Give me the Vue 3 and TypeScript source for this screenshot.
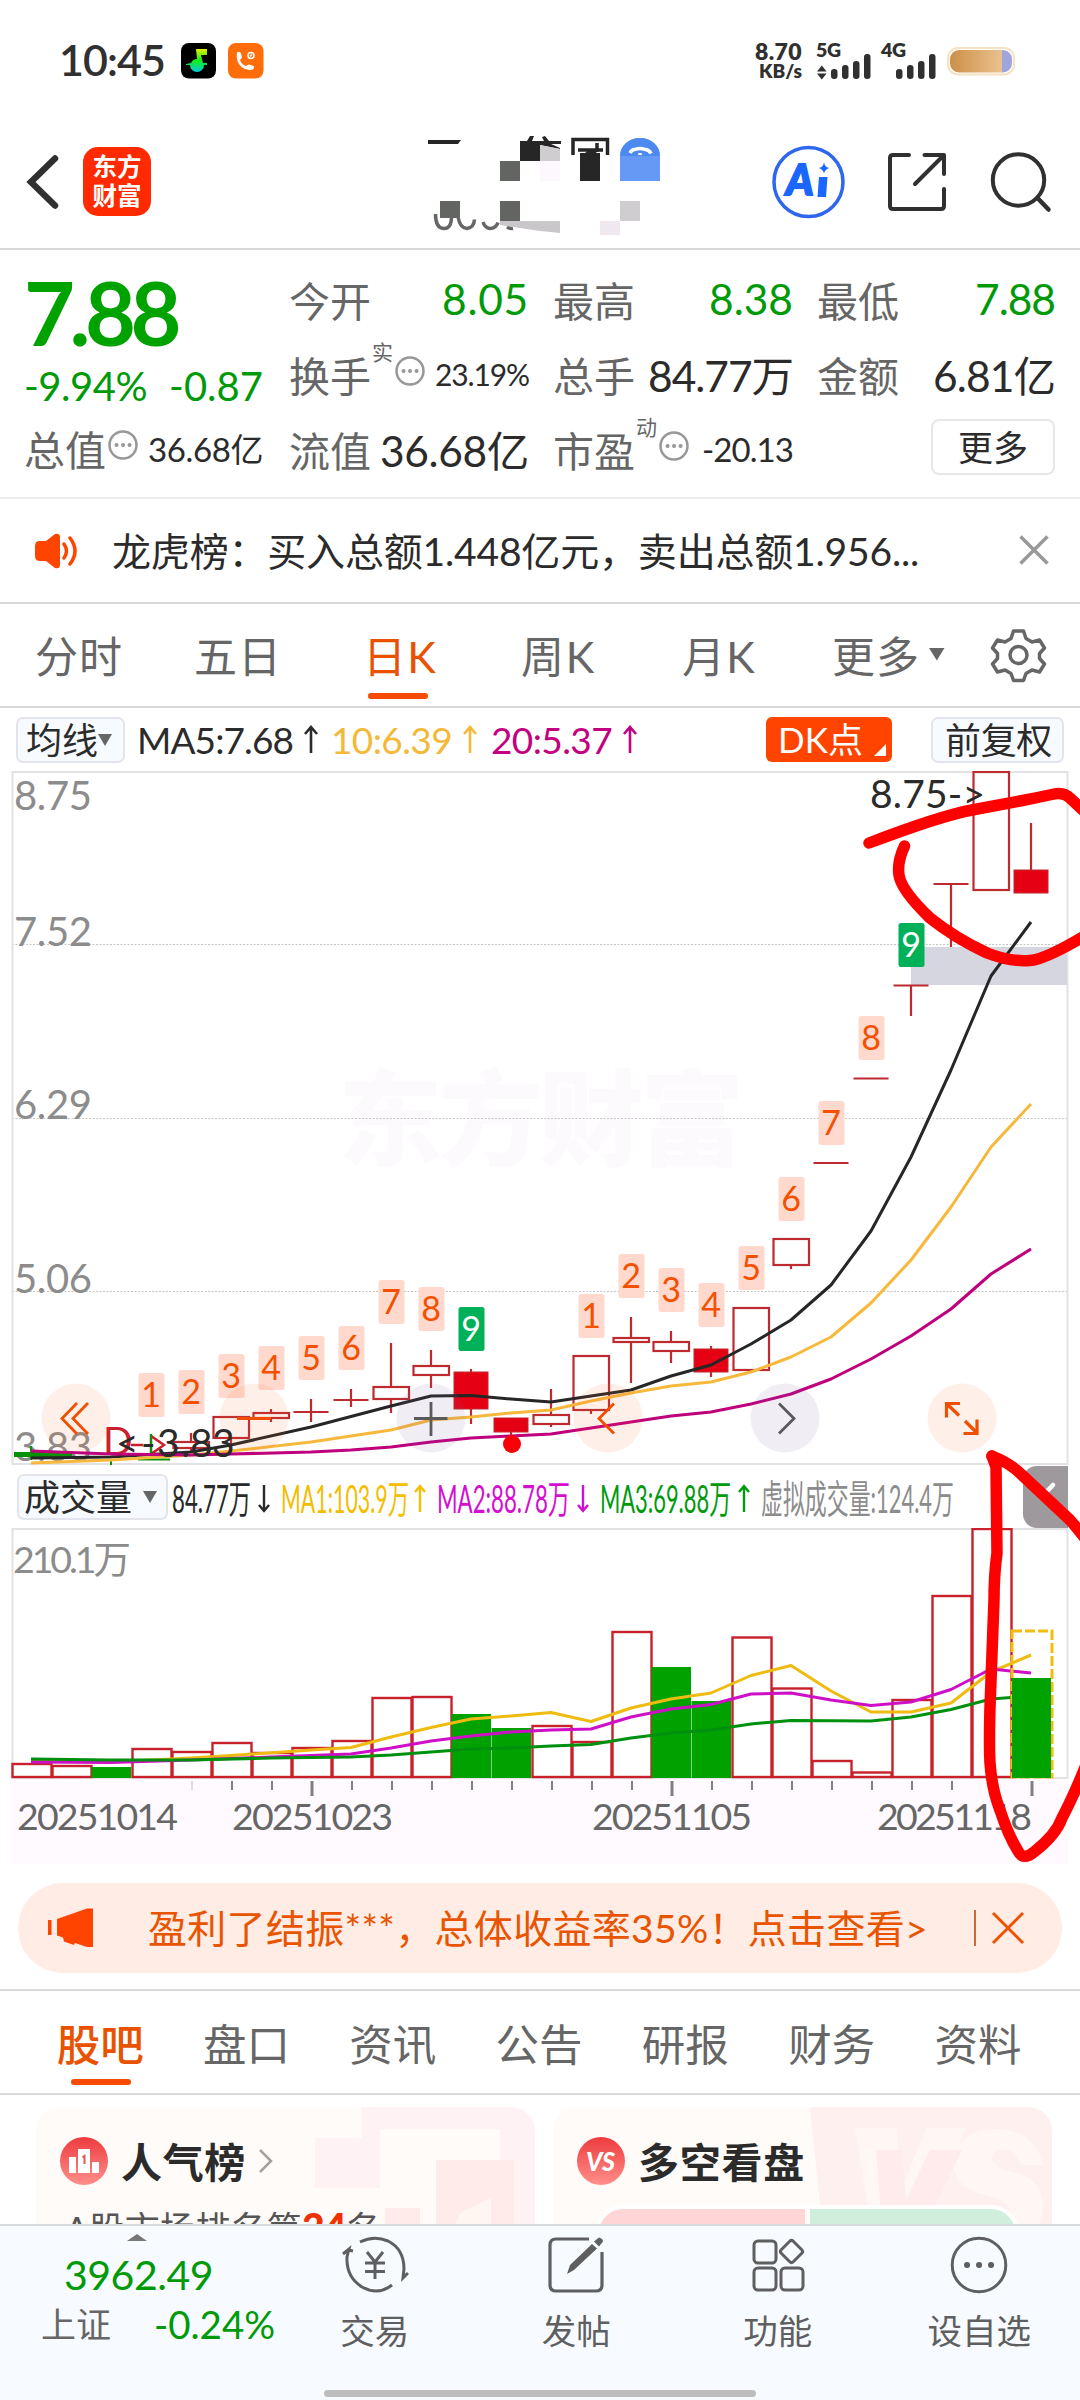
<script setup lang="ts">
type Candle = {
  x: number
  top: number
  bottom: number
  high?: number
  low?: number
  kind: 'hollow' | 'solid' | 'line'
}
type Badge = { x: number; y: number; n: number; green?: boolean }
type Bar = { x: number; top: number; down?: boolean }

/* Spreads the letters of an element so that it takes the given width. */
const vFit = {
  mounted(el: HTMLElement, binding: { value: number }) {
    const count = (el.textContent ?? '').trim().length
    const natural = el.getBoundingClientRect().width
    el.style.letterSpacing = `${(binding.value - natural) / count}px`
  },
}

const periods = [
  { name: '分时', left: 35, width: 88 },
  { name: '五日', left: 194, width: 88 },
  { name: '日K', left: 363, width: 74, active: true },
  { name: '周K', left: 521, width: 75 },
  { name: '月K', left: 682, width: 74 },
  { name: '更多', left: 832, width: 88 },
]

const sections = ['股吧', '盘口', '资讯', '公告', '研报', '财务', '资料']

const gridLines = [944.5, 1118.5, 1291.5]
const axis = [
  { v: '8.75', y: 810 },
  { v: '7.52', y: 946 },
  { v: '6.29', y: 1119 },
  { v: '5.06', y: 1293 },
  { v: '3.83', y: 1461 },
]

const candles: Candle[] = [
  { x: 1031, top: 870, bottom: 893, high: 823, kind: 'solid' },
  { x: 991, top: 772, bottom: 890, kind: 'hollow' },
  { x: 951, top: 884, bottom: 884, low: 947, kind: 'line' },
  { x: 911, top: 985.5, bottom: 985.5, low: 1016, kind: 'line' },
  { x: 871, top: 1078.5, bottom: 1078.5, kind: 'line' },
  { x: 831, top: 1163, bottom: 1163, kind: 'line' },
  { x: 791, top: 1239, bottom: 1265, low: 1269, kind: 'hollow' },
  { x: 751, top: 1308, bottom: 1370, kind: 'hollow' },
  { x: 711, top: 1349, bottom: 1372, high: 1346, low: 1377, kind: 'solid' },
  { x: 671, top: 1342, bottom: 1351, high: 1331, low: 1363, kind: 'hollow' },
  { x: 631, top: 1338, bottom: 1342, high: 1317, low: 1383, kind: 'hollow' },
  { x: 591, top: 1356, bottom: 1410, low: 1414, kind: 'hollow' },
  { x: 551, top: 1415, bottom: 1424, high: 1389, low: 1427, kind: 'hollow' },
  { x: 511, top: 1418, bottom: 1432, low: 1438, kind: 'solid' },
  { x: 471, top: 1372, bottom: 1409, high: 1369, low: 1424, kind: 'solid' },
  { x: 431, top: 1366, bottom: 1375, high: 1350, low: 1388, kind: 'hollow' },
  { x: 391, top: 1387, bottom: 1399, high: 1343, low: 1413, kind: 'hollow' },
  { x: 351, top: 1400, bottom: 1400, high: 1389, low: 1407, kind: 'line' },
  { x: 311, top: 1412, bottom: 1412, high: 1399, low: 1422, kind: 'line' },
  { x: 271, top: 1413, bottom: 1418, high: 1409, low: 1422, kind: 'hollow' },
  { x: 231, top: 1417, bottom: 1438, low: 1445, kind: 'hollow' },
  { x: 191, top: 1442, bottom: 1448, high: 1433, low: 1452, kind: 'hollow' },
]

const badges: Badge[] = [
  { x: 151, y: 1373, n: 1 },
  { x: 191, y: 1370, n: 2 },
  { x: 231, y: 1354, n: 3 },
  { x: 271, y: 1346, n: 4 },
  { x: 311, y: 1336, n: 5 },
  { x: 351, y: 1326, n: 6 },
  { x: 391, y: 1280, n: 7 },
  { x: 431, y: 1287, n: 8 },
  { x: 471, y: 1307, n: 9, green: true },
  { x: 591, y: 1294, n: 1 },
  { x: 631, y: 1254, n: 2 },
  { x: 671, y: 1268, n: 3 },
  { x: 711, y: 1283, n: 4 },
  { x: 751, y: 1246, n: 5 },
  { x: 791, y: 1177, n: 6 },
  { x: 831, y: 1101, n: 7 },
  { x: 871, y: 1016, n: 8 },
  { x: 911, y: 923, n: 9, green: true },
]

const ma5 =
  '31,1458 111,1457 191,1452 231,1445 311,1427 391,1406 431,1396 471,1395.5 511,1399 551,1402 591,1396 631,1390 671,1376 711,1365 751,1344 791,1320 831,1285 871,1231 911,1157 951,1070 991,976 1031,922'
const ma10 =
  '31,1463 111,1460 191,1455 231,1451 311,1442 391,1430 431,1420 471,1417 511,1413 551,1410 591,1401 631,1393 671,1386 711,1382 751,1372 791,1357 831,1337 871,1303 911,1260 951,1207 991,1147 1031,1104'
const ma20 =
  '31,1451 111,1454 191,1455 231,1454 311,1452 351,1450 391,1447 431,1442 471,1438 511,1436 551,1434 591,1428 631,1422 671,1416 711,1412 751,1404 791,1394 831,1379 871,1359 911,1336 951,1309 991,1274 1031,1249'

const bars: Bar[] = [
  { x: 31, top: 1764 },
  { x: 71, top: 1766 },
  { x: 111, top: 1767, down: true },
  { x: 151, top: 1749 },
  { x: 191, top: 1752 },
  { x: 231, top: 1743 },
  { x: 271, top: 1753 },
  { x: 311, top: 1748 },
  { x: 351, top: 1741 },
  { x: 391, top: 1698 },
  { x: 431, top: 1697 },
  { x: 471, top: 1714, down: true },
  { x: 511, top: 1728, down: true },
  { x: 551, top: 1726 },
  { x: 591, top: 1742 },
  { x: 631, top: 1632 },
  { x: 671, top: 1667, down: true },
  { x: 711, top: 1701, down: true },
  { x: 751, top: 1637.5 },
  { x: 791, top: 1688.5 },
  { x: 831, top: 1761 },
  { x: 871, top: 1772.5 },
  { x: 911, top: 1700 },
  { x: 951, top: 1596 },
  { x: 991, top: 1529 },
]
const vol1 =
  '31,1761 111,1762 191,1758 231,1755.5 311,1750 351,1747.5 391,1737 431,1727.5 471,1719 511,1716 551,1712.5 591,1721.5 631,1708 671,1699 711,1693 751,1675.5 791,1665.5 831,1691 871,1712 911,1712 951,1703 991,1672 1031,1655'
const vol2 =
  '31,1762 111,1762.5 191,1760 271,1757 351,1754 391,1748 431,1741 471,1736 511,1732 551,1730 591,1729 631,1717 671,1709 711,1704.5 751,1694 791,1693 831,1700 871,1705.5 911,1702 951,1689.5 991,1669 1031,1673'
const vol3 =
  '31,1759 111,1760 191,1760 271,1758 351,1757 391,1755 431,1752 471,1749 511,1748 551,1746 591,1744.5 631,1738 671,1733 711,1730 751,1724 791,1720.5 871,1721 911,1717 951,1709.5 991,1699 1031,1696'

const ticks = Array.from({ length: 22 }, (_, i) => 192 + i * 40)
const isMajor = (x: number): boolean => x === 312 || x === 672 || x === 1032

const volumeStats = [
  { text: '84.77万', x: 172, w: 79, color: '#2a2a2a', arrow: 264, up: false },
  { text: 'MA1:103.9万', x: 281, w: 128, color: '#f3bd00', arrow: 420, up: true },
  { text: 'MA2:88.78万', x: 437, w: 133, color: '#d40fcf', arrow: 583, up: false },
  { text: 'MA3:69.88万', x: 600, w: 131, color: '#009a0c', arrow: 744, up: true },
  { text: '虚拟成交量:124.4万', x: 761, w: 193, color: '#8c8c8c', arrow: 0, up: true },
]
</script>

<template>
  <div class="page">
    <!-- status bar -->
    <div class="status">
      <span v-fit="106" class="clock">10:45</span>
      <svg class="app-ic" width="36" height="36" viewBox="0 0 36 36">
        <defs>
          <linearGradient id="note" x1="0" y1="0" x2="0" y2="1">
            <stop offset="0" stop-color="#e4f000" />
            <stop offset=".5" stop-color="#10f010" />
            <stop offset="1" stop-color="#00c8e0" />
          </linearGradient>
        </defs>
        <rect width="35" height="35.5" rx="8" />
        <path d="M15 6h11v6h-6l2 8h4v2h-3a7 7 0 0 1-14 0H5v-1l5-1a7 7 0 0 1 6-4z" fill="url(#note)" />
      </svg>
      <svg class="app-ic2" width="36" height="36" viewBox="0 0 36 36">
        <rect width="35.5" height="35.5" rx="8" fill="#ff6c0a" />
        <path d="M9 9.500q3-2 4 1l1 4-2 2.500q1 4 6 6l3-1.500 4.500 1.500q1.500 2-1 3.500-5 2-11-2.500-6-5.500-4.500-14.500z" fill="#fff" />
        <circle cx="23" cy="12.500" r="3" fill="none" stroke="#fff" stroke-width="1.600" />
        <path d="M22 13.500l2-2" stroke="#fff" stroke-width="1.200" />
      </svg>
      <div class="speed">
        <span v-fit="47" class="sp1">8.70</span>
        <span v-fit="43" class="sp2">KB/s</span>
      </div>
      <svg class="signals" width="210" height="50" viewBox="815 31 210 50">
        <g class="net">
          <text x="816" y="57" textLength="25">5G</text>
          <text x="881" y="57" textLength="25">4G</text>
        </g>
        <g fill="#303030">
          <path d="M817 71.500l4.800-6 4.800 6zM817 73.500l4.800 6 4.800-6z" />
          <rect x="831" y="69" width="6.500" height="10" rx="3" />
          <rect x="842" y="65" width="6.500" height="14" rx="3" />
          <rect x="853" y="61" width="6.500" height="18" rx="3" />
          <rect x="864" y="54" width="6.500" height="25" rx="3" />
          <rect x="896" y="69" width="6.500" height="10" rx="3" />
          <rect x="907" y="65" width="6.500" height="14" rx="3" />
          <rect x="918" y="61" width="6.500" height="18" rx="3" />
          <rect x="929" y="54" width="6.500" height="25" rx="3" />
        </g>
        <defs>
          <linearGradient id="bat"><stop offset="0" stop-color="#cb8f49" /><stop offset="1" stop-color="#ebc18e" /></linearGradient>
          <clipPath id="batclip"><rect x="950" y="50" width="62" height="22.500" rx="9" /></clipPath>
        </defs>
        <rect x="948" y="48" width="66" height="26.500" rx="10" fill="#fff" stroke="#f5e2c0" stroke-width="2" />
        <g clip-path="url(#batclip)">
          <rect x="950" y="50" width="52" height="23" fill="url(#bat)" />
          <rect x="1002" y="50" width="10" height="23" fill="#a0a5dc" />
        </g>
      </svg>
    </div>

    <!-- title bar -->
    <header class="header">
      <svg class="back" width="40" height="60" viewBox="22 152 40 60">
        <path d="M55 158.500L31 182l24 23.500" fill="none" stroke="#303030" stroke-width="6.500" stroke-linecap="round" />
      </svg>
      <div class="logo"><span>东方</span><span>财富</span></div>
      <svg class="mosaic" width="240" height="110" viewBox="425 130 240 110">
        <path d="M428 140h33l-3 4h-30z" fill="#262626" />
        <path d="M520 141h7l3-5h4l-2 5h8v20h-20zM540 141h4l-2-4 3-1 4 5h12v3h-10l9 4v1l-20-4z" fill="#262626" />
        <path d="M540 145l20 4v12h-20z" fill="#cfcdcf" />
        <rect x="540" y="161" width="20" height="20" fill="#fdf8fe" />
        <g fill="#636563">
          <rect x="500" y="161" width="20" height="20" />
          <rect x="440" y="201" width="20" height="17" />
          <rect x="500" y="201" width="20" height="20" />
        </g>
        <g fill="none" stroke="#666" stroke-width="3.500">
          <path d="M435.500 214q0 14 8 14.500t8-12M458 217q2 11 9 11.500 7-1 7.500-9M483 222q2 6 7 6.500 6 0 8-6M507 227q3 2 6 1.500" />
        </g>
        <path d="M500 221h60v12l-20-2-40-6z" fill="#cac7ca" />
        <path d="M573 155v-15.500h34.500V155M578 150h25M597 143v9M586 154l10-3" fill="none" stroke="#262626" stroke-width="3.500" />
        <rect x="580" y="153" width="20" height="28" fill="#262626" />
        <path d="M620 156a20 18 0 0 1 40 0v25h-40z" fill="#6699f6" />
        <path d="M620 156a20 18 0 0 1 40 0z" fill="#4c8af0" />
        <path d="M630 153q2-4 5-3.500 5-2 10 0 4 0 6 4M640 153v2" fill="none" stroke="#fff" stroke-width="3.500" />
        <rect x="620" y="201" width="20" height="20" fill="#cfcdcf" />
        <rect x="600" y="221" width="20" height="14" fill="#efe9ef" />
      </svg>
      <svg class="actions" width="290" height="80" viewBox="770 142 290 80">
        <circle cx="808.500" cy="182" r="34.500" fill="none" stroke="#2f66ee" stroke-width="3.500" />
        <text class="ai" x="786" y="194.500">A</text>
        <path d="M819 177h8.500l-1.500 20h-8.500z" fill="#1a66ff" />
        <path d="M824 162.500q1 5 5.500 5.500-4.500 1-5.500 5.500-1-4.500-5.500-5.500 4.500-.5 5.500-5.500z" fill="#1a66ff" />
        <g fill="none" stroke="#303030" stroke-width="4" stroke-linecap="round" stroke-linejoin="round">
          <path d="M909 155h-16q-3 0-3 3v48q0 3 3 3h48q3 0 3-3v-17M924.500 155H944v19M943 156l-28 28" />
          <circle cx="1018.500" cy="180" r="25.700" />
          <path d="M1037.500 198l11 11.500" stroke-width="4.500" />
        </g>
      </svg>
    </header>

    <!-- quote -->
    <section class="quote">
      <div class="main-col">
        <div class="price"><span v-fit="152">7.88</span></div>
        <div class="change"><span v-fit="123">-9.94%</span><span v-fit="94">-0.87</span></div>
        <div class="cell total">
          <span class="label">总值</span>
          <svg class="dots" width="30" height="30" viewBox="0 0 30 30"><circle cx="15" cy="15" r="13.500" /><path d="M8.500 15h.1M15 15h.1M21.500 15h.1" /></svg>
          <span v-fit="115" class="val md">36.68亿</span>
        </div>
      </div>
      <div class="cols">
        <div class="cell"><span class="label">今开</span><span v-fit="87" class="val green">8.05</span></div>
        <div class="cell"><span class="label">最高</span><span v-fit="84" class="val green">8.38</span></div>
        <div class="cell"><span class="label">最低</span><span v-fit="80" class="val green">7.88</span></div>
        <div class="cell">
          <span class="label">换手</span><span class="sup">实</span>
          <svg class="dots" width="30" height="30" viewBox="0 0 30 30"><circle cx="15" cy="15" r="13.500" /><path d="M8.500 15h.1M15 15h.1M21.500 15h.1" /></svg>
          <span v-fit="94" class="val sm">23.19%</span>
        </div>
        <div class="cell"><span class="label">总手</span><span v-fit="145" class="val">84.77万</span></div>
        <div class="cell"><span class="label">金额</span><span v-fit="122" class="val">6.81亿</span></div>
        <div class="cell"><span class="label">流值</span><span v-fit="149" class="val">36.68亿</span></div>
        <div class="cell">
          <span class="label">市盈</span><span class="sup">动</span>
          <svg class="dots" width="30" height="30" viewBox="0 0 30 30"><circle cx="15" cy="15" r="13.500" /><path d="M8.500 15h.1M15 15h.1M21.500 15h.1" /></svg>
          <span v-fit="91" class="val md">-20.13</span>
        </div>
        <div class="cell"><button class="more">更多</button></div>
      </div>
    </section>

    <!-- notice -->
    <section class="notice">
      <svg width="48" height="40" viewBox="32 530 48 40">
        <path d="M35 545q0-5 5-5h6l9-7q5-1 5 3v28q0 4-5 3l-9-7h-6q-5 0-5-5z" fill="#ff4400" />
        <path d="M64 543q5 7 0 14M70 537q10 13 0 26" fill="none" stroke="#ff4400" stroke-width="3.500" stroke-linecap="round" />
      </svg>
      <span v-fit="807" class="notice-text">龙虎榜：买入总额1.448亿元，卖出总额1.956...</span>
      <svg class="close" width="34" height="34" viewBox="0 0 34 34"><path d="M3.500 3.500l27 27M30.500 3.500l-27 27" stroke="#999" stroke-width="3.500" /></svg>
    </section>

    <!-- periods -->
    <nav class="periods">
      <div v-for="p in periods" :key="p.name" class="period" :class="{ on: p.active }" :style="{ left: p.left + 'px' }">
        <span v-fit="p.width">{{ p.name }}</span>
      </div>
      <svg class="gear" width="150" height="60" viewBox="920 625 150 60">
        <path d="M929 649h15.500l-7.700 12.500z" fill="#666" />
        <path
          d="M1013.500 632h10l2.500 7.500 6 3.500 7.500-2 5 8-5 5.500v5l5 5.500-5 8-7.500-2-6 3.500-2.500 7h-10l-2.500-7-6-3.500-7.500 2-5-8 5-5.500v-5l-5-5.500 5-8 7.500 2 6-3.500z"
          fill="none" stroke="#666" stroke-width="3.500" stroke-linejoin="round" />
        <circle cx="1018.500" cy="656" r="8.500" fill="none" stroke="#666" stroke-width="3.500" />
      </svg>
    </nav>

    <!-- moving averages -->
    <div class="ma-bar">
      <div class="pill ma-pick"><span v-fit="72">均线</span><i class="tri"></i></div>
      <span v-fit="156" class="ma black">MA5:7.68</span>
      <svg class="arr a1" width="16" height="30" viewBox="0 0 16 30"><path d="M8 28V3M2 9l6-7 6 7" /></svg>
      <span v-fit="121" class="ma yellow">10:6.39</span>
      <svg class="arr a2" width="16" height="30" viewBox="0 0 16 30"><path d="M8 28V3M2 9l6-7 6 7" /></svg>
      <span v-fit="121" class="ma pink">20:5.37</span>
      <svg class="arr a3" width="16" height="30" viewBox="0 0 16 30"><path d="M8 28V3M2 9l6-7 6 7" /></svg>
      <div class="dk"><span v-fit="85">DK点</span></div>
      <div class="pill adj"><span v-fit="107">前复权</span></div>
    </div>

    <!-- candles -->
    <svg class="kchart" width="1080" height="694" viewBox="0 771 1080 694">
      <text class="mark" x="338" y="1158" textLength="406">东方财富</text>
      <g stroke="#c6c6c6" stroke-width="1" stroke-dasharray="2 1.500">
        <line v-for="y in gridLines" :key="y" x1="12" x2="1067" :y1="y" :y2="y" />
      </g>
      <path d="M12.500 1464V772H1067.500V1464z" fill="none" stroke="#e2e2e4" stroke-width="2" />
      <rect x="911" y="947" width="156" height="38" fill="#d6d6e0" />
      <text v-for="a in axis" :key="a.v" class="axis" x="14" :y="a.y" textLength="78">{{ a.v }}</text>

      <g stroke="#089208" fill="none" stroke-width="2">
        <path d="M31 1446v14M111 1459v6M138 1459.500h32" />
        <path d="M14 1454.500h58" stroke-width="5" />
      </g>
      <text class="hi drop" x="103" y="1455">D</text>
      <path d="M151 1436v18l13-9zM131 1445h12" fill="none" stroke="#c8212c" stroke-width="2.500" />
      <path d="M151 1434v20" stroke="#089208" stroke-width="2" />

      <g v-for="c in candles" :key="c.x" stroke="#bd2a30" stroke-width="2.200">
        <line v-if="c.high" :x1="c.x" :x2="c.x" :y1="c.high" :y2="c.top" />
        <line v-if="c.low" :x1="c.x" :x2="c.x" :y1="c.bottom" :y2="c.low" />
        <line v-if="c.kind === 'line'" :x1="c.x - 17.500" :x2="c.x + 17.500" :y1="c.top" :y2="c.top" />
        <rect v-else-if="c.kind === 'solid'" :x="c.x - 17" :y="c.top" width="34" :height="c.bottom - c.top" fill="#e60014" stroke-width="1" />
        <rect v-else :x="c.x - 17.500" :y="c.top" width="35.500" :height="c.bottom - c.top" fill="#fff" />
      </g>

      <g v-for="b in badges" :key="'b' + b.x">
        <rect :x="b.x - 12.500" :y="b.y" width="26" height="44" rx="2.500" :fill="b.green ? '#00b159' : '#ffd9cd'" />
        <text class="badge" :x="b.x" :y="b.y + 34" :fill="b.green ? '#fff' : '#f45000'">{{ b.n }}</text>
      </g>

      <g fill="none" stroke-width="3" stroke-linejoin="round">
        <polyline :points="ma5" stroke="#262626" />
        <polyline :points="ma10" stroke="#f7b83c" />
        <polyline :points="ma20" stroke="#bf007c" />
      </g>
      <circle cx="512" cy="1444" r="9" fill="#fb0007" />

      <g class="rounds">
        <circle cx="76" cy="1418" r="34.500" fill="#ff6a30" />
        <circle cx="254" cy="1418" r="34.500" fill="#ff6a30" />
        <circle cx="431" cy="1418" r="34.500" fill="#7a5a9a" />
        <circle cx="608" cy="1418" r="34.500" fill="#ff6a30" />
        <circle cx="785" cy="1418" r="34.500" fill="#7a5a9a" />
        <circle cx="962" cy="1418" r="34.500" fill="#ff6a30" />
      </g>
      <g fill="none" stroke="#f04e00" stroke-width="2.800">
        <path d="M77 1403l-15 15.500 15 15.500M88 1403l-15 15.500 15 15.500M237 1418.500h34M614 1403.500l-15 15 15 15" />
        <path d="M960 1403.500h-13.500v14M947 1404l12 11.500M963.500 1433.500H977v-14M977 1433l-12-12" stroke-width="3.200" />
      </g>
      <path d="M431 1402v34M414 1418.500h33.500M779 1403.500l15 15-15 15" fill="none" stroke="#5a5a5c" stroke-width="2.800" />
      <text class="hi" x="870" y="808" textLength="115">8.75-&gt;</text>
      <text class="hi" x="116 141 157 181 190 212" y="1457">&lt;-3.83</text>
    </svg>

    <!-- volume -->
    <div class="vol-head">
      <div class="pill vol-pick"><span v-fit="108">成交量</span><i class="tri"></i></div>
      <svg class="vol-stats" width="790" height="60" viewBox="172 1466 790 60">
        <g v-for="s in volumeStats" :key="s.text" :fill="s.color">
          <text class="stat" :x="s.x" y="1511.500" :textLength="s.w" lengthAdjust="spacingAndGlyphs">{{ s.text }}</text>
          <path
            v-if="s.arrow" fill="none" :stroke="s.color" stroke-width="2.400"
            :d="s.up ? `M${s.arrow} 1511v-26m-5 6l5-6 5 6` : `M${s.arrow} 1484v26m-5-6l5 6 5-6`" />
        </g>
      </svg>
      <div class="fold"><svg width="45" height="62" viewBox="1023 1466 45 62"><path d="M1053 1485l-11 11.500 11 11.500" fill="none" stroke="#fff" stroke-width="4.500" stroke-linecap="round" /></svg></div>
    </div>
    <svg class="vchart" width="1080" height="337" viewBox="0 1528 1080 337">
      <rect x="12" y="1778" width="1056" height="86" fill="#fefaff" />
      <path d="M12.500 1778V1529H1067.500V1778z" fill="none" stroke="#e2e2e4" stroke-width="2" />
      <text class="axis vtop" x="13" y="1572.500" textLength="118">210.1万</text>
      <g v-for="b in bars" :key="b.x">
        <rect v-if="b.down" :x="b.x - 19.500" :y="b.top" width="39.500" :height="1778 - b.top" fill="#00a200" />
        <rect v-else :x="b.x - 18.500" :y="b.top" width="39" :height="1777 - b.top" fill="#fff" stroke="#c8212c" stroke-width="2.400" />
      </g>
      <g fill="none" stroke-width="3" stroke-linejoin="round">
        <polyline :points="vol1" stroke="#efbb10" />
        <polyline :points="vol2" stroke="#cf0fc8" />
        <polyline :points="vol3" stroke="#009010" />
      </g>
      <rect x="1012" y="1631" width="40" height="146" fill="none" stroke="#f3bd10" stroke-width="3" stroke-dasharray="10 3" />
      <rect x="1012" y="1678" width="39" height="100" fill="#00a200" />
      <line v-for="t in ticks" :key="t" :x1="t" :x2="t" y1="1781" :y2="isMajor(t) ? 1796 : 1790" :stroke="t === 192 ? '#ddd' : '#808080'" :stroke-width="isMajor(t) ? 3 : 2" />
      <g class="date">
        <text x="17" y="1830" textLength="161">20251014</text>
        <text x="232" y="1830" textLength="161">20251023</text>
        <text x="592" y="1830" textLength="160">20251105</text>
        <text x="877" y="1830" textLength="155">20251118</text>
      </g>
    </svg>

    <!-- promo -->
    <div class="promo">
      <svg width="50" height="44" viewBox="46 1906 50 44">
        <path d="M48 1920h3.500v15H48zM57 1919l30-10.500h6V1947h-6l-12-4-1 2-10-3.500-1-4-6-2z" fill="#ff4400" />
      </svg>
      <span v-fit="780" class="promo-text">盈利了结振***，总体收益率35%！点击查看&gt;</span>
      <i class="bar"></i>
      <svg class="x" width="34" height="34" viewBox="0 0 34 34"><path d="M2 2l30 30M32 2L2 32" stroke="#ee5200" stroke-width="3" /></svg>
    </div>

    <nav class="sections">
      <span v-for="(s, i) in sections" :key="s" :class="{ on: i === 0 }">{{ s }}</span>
    </nav>

    <div class="cards">
      <div class="card">
        <svg class="card-bg" width="499" height="117" viewBox="36 2107 499 117">
          <path d="M362 2107h173v117h-35v-95H380v59h-65v-50h47z" fill="#fff2f4" />
          <path d="M436 2160h78v64h-78zM385 2208h35v16h-35z" fill="#ffebea" />
          <path d="M455 2224l6-12 30-14v26z" fill="#fff6f2" />
        </svg>
        <div class="card-title">
          <svg width="48" height="48" viewBox="0 0 48 48">
            <defs><linearGradient id="ic" x1="0" y1="0" x2="0" y2="1"><stop offset="0" stop-color="#ee3b3f" /><stop offset="1" stop-color="#ff8f8a" /></linearGradient></defs>
            <circle cx="24" cy="24" r="24" fill="url(#ic)" />
            <path d="M9 20h7v16H9zM18 12h12v24H18zM32 25h7v11h-7z" fill="#fff" />
            <path d="M22.500 20.500l2-1.500v8" fill="none" stroke="#ee5555" stroke-width="2" />
          </svg>
          <span v-fit="125">人气榜</span>
          <svg class="chev" width="16" height="26" viewBox="0 0 16 26"><path d="M2 2l11 11L2 24" fill="none" stroke="#a8a0a0" stroke-width="2.500" /></svg>
        </div>
        <div class="rank"><span v-fit="237">A股市场排名第</span><b v-fit="44">24</b><span>名</span></div>
      </div>
      <div class="card">
        <svg class="card-bg" width="499" height="117" viewBox="553 2107 499 117">
          <path d="M810 2107h242v117H822z" fill="#fff0f0" />
          <path d="M855 2128h42l5 60 24-60h40l-45 96h-50z" fill="#fff7f3" />
          <path d="M1043 2165q-8-36-50-36-38 2-40 36 2 25 40 32 22 6 16 27h30q16-45-34-54-20-8-10-18 18-9 26 13z" fill="#fff7f4" />
          <path d="M876 2150h26l4 50 24-50h32l-36 74h-44z" fill="#ffebeb" />
        </svg>
        <div class="card-title">
          <svg width="48" height="48" viewBox="0 0 48 48">
            <circle cx="24" cy="24" r="24" fill="url(#ic)" />
            <text class="vs" x="23.500" y="34" textLength="29" lengthAdjust="spacingAndGlyphs">VS</text>
          </svg>
          <span v-fit="167">多空看盘</span>
        </div>
        <div class="duel"><i class="r"></i><i class="g"></i></div>
      </div>
    </div>

    <footer class="dock">
      <div class="index">
        <i class="up"></i>
        <div class="idx"><span v-fit="149">3962.49</span></div>
        <div class="idx2"><span v-fit="70" class="nm">上证</span><span v-fit="121" class="pc">-0.24%</span></div>
      </div>
      <div class="item">
        <svg width="68" height="60" viewBox="341 2233 68 60">
          <g fill="none" stroke="#5f5f61" stroke-width="3">
            <path d="M360 2241q14-7 28-1 16 8 16 28l-1 9 5-5M392 2284q-14 11-30 2-16-10-15-30l2-8-6 5M353 2250l-5-1" />
            <path d="M367 2251l8 10 8-10M375 2261v17M365 2262h20M365 2270.500h20" />
          </g>
        </svg>
        <span>交易</span>
      </div>
      <div class="item">
        <svg width="68" height="60" viewBox="543 2233 68 60">
          <path d="M590 2238h-33q-6 0-6 6v40q0 6 6 6h40q6 0 6-6v-33" fill="none" stroke="#5f5f61" stroke-width="3.200" />
          <path d="M568 2273l3-9 22-21 5 4.500-23 21.500zM595 2240.500l5-4q4 1 4 4l-4 5z" fill="#5f5f61" />
        </svg>
        <span>发帖</span>
      </div>
      <div class="item">
        <svg width="68" height="60" viewBox="744 2233 68 60">
          <g fill="none" stroke="#5f5f61" stroke-width="3">
            <rect x="754" y="2240" width="22" height="22" rx="4" />
            <rect x="754" y="2267" width="22" height="22" rx="4" />
            <rect x="781" y="2267" width="22" height="22" rx="4" />
            <rect x="783" y="2242" width="17" height="17" rx="2.500" transform="rotate(45 791.500 2250.500)" />
          </g>
        </svg>
        <span>功能</span>
      </div>
      <div class="item">
        <svg width="68" height="60" viewBox="945 2233 68 60">
          <circle cx="979" cy="2264" r="26.800" fill="none" stroke="#5f5f61" stroke-width="3" />
          <path d="M967 2264h.1M979 2264h.1M991 2264h.1" stroke="#5f5f61" stroke-width="6" stroke-linecap="round" />
        </svg>
        <span>设自选</span>
      </div>
      <i class="home"></i>
    </footer>

    <!-- hand-drawn marks over both charts -->
    <svg class="ink" width="1080" height="1120" viewBox="0 770 1080 1120">
      <path d="M869 843Q940 816 972 810T1020 801 1054 794Q1064 792 1070 798L1086 813" />
      <path d="M904.500 846Q897 862 899 875 901 890 930 918 955 938 987 953 1010 962 1030 960.500 1046 959 1086 935" />
      <path d="M992 1456L996 1467 997 1553Q994 1575 994 1600L990 1707Q989 1745 990 1763 992 1790 1000 1810 1008 1835 1018 1851 1023 1861 1034 1852 1056 1835 1062 1818 1074 1795 1086 1765" />
      <path d="M992 1456Q1010 1463 1022 1475L1070 1520Q1079 1530 1090 1545" />
    </svg>
  </div>
</template>

<style>
body {
  background: #fff;
}
</style>

<style scoped>
.page {
  position: relative;
  width: 1080px;
  height: 2400px;
  overflow: hidden;
  background: #fff;
  font-family: Lato, "Noto Sans CJK SC", sans-serif;
  color: #2b2b2b;
  display: flex;
  flex-direction: column;
}
.page > * {
  flex: none;
  box-sizing: border-box;
}
span,
b {
  white-space: nowrap;
}
svg {
  display: block;
  flex: none;
}
.status {
  height: 100px;
  display: flex;
  align-items: flex-start;
  padding-left: 59px;
}
.clock {
  font-size: 43px;
  line-height: 60px;
  margin-top: 30px;
  font-weight: 600;
  color: #303030;
}
.app-ic {
  margin: 43px 0 0 16px;
}
.app-ic2 {
  margin: 43px 0 0 11px;
}
.speed {
  margin-left: auto;
  width: 48px;
  display: flex;
  flex-direction: column;
  align-items: flex-end;
  font-weight: 800;
  padding-top: 39px;
  color: #303030;
}
.sp1 {
  font-size: 23px;
  line-height: 24px;
}
.sp2 {
  font-size: 19px;
  line-height: 16px;
}
.signals {
  margin: 31px 55px 0 13px;
}
.net text {
  font-size: 19.500px;
  font-weight: 800;
  fill: #303030;
}
.header {
  height: 150px;
  border-bottom: 2px solid #d9d9d9;
  display: flex;
  align-items: flex-start;
  padding-left: 22px;
}
.back {
  margin-top: 52px;
}
.logo {
  margin: 47px 0 0 21px;
  width: 68px;
  height: 69px;
  border-radius: 15px;
  background: #ff2a00;
  color: #fff;
  font-size: 24.500px;
  font-weight: 700;
  line-height: 29px;
  text-align: center;
  display: flex;
  flex-direction: column;
  justify-content: center;
  box-sizing: border-box;
  padding-bottom: 2px;
}
.mosaic {
  margin: 30px 0 0 274px;
}
.actions {
  margin: 42px 0 0 105px;
}
.ai {
  font-family: Lato, sans-serif;
  font-weight: 900;
  font-style: italic;
  font-size: 42px;
  fill: #1a66ff;
  stroke: #1a66ff;
  stroke-width: 1.800px;
}
.quote {
  height: 249px;
  border-bottom: 2px solid #ececec;
  display: flex;
}
.main-col {
  width: 289px;
  padding-left: 24px;
  box-sizing: border-box;
}
.price {
  margin-top: 8px;
  height: 108px;
  line-height: 109px;
  font-size: 88px;
  font-weight: 700;
  color: #00a200;
}
.change {
  height: 40px;
  line-height: 41px;
  font-size: 40px;
  color: #009a08;
  display: flex;
  width: 239px;
  justify-content: space-between;
}
.cols {
  margin-top: 11px;
  display: grid;
  grid-template-columns: 240px 240px 238px;
  grid-auto-rows: 75px;
  column-gap: 24px;
}
.cell {
  display: flex;
  align-items: center;
  height: 75px;
}
.total {
  margin-top: 4px;
  width: 239px;
}
.label {
  font-size: 41px;
  color: #666;
}
.val {
  margin-left: auto;
  font-size: 42.500px;
}
.green {
  color: #009a08;
}
.val.sm {
  font-size: 30px;
}
.val.md {
  font-size: 33px;
}
.sup {
  font-size: 21px;
  color: #666;
  align-self: flex-start;
  margin-top: 0;
  margin-left: 1px;
}
.dots {
  fill: none;
  stroke: #9a9799;
  stroke-width: 2.500;
  margin: -6px 0 0 2px;
}
.sup + .dots {
  margin-left: 2px;
}
.dots path {
  stroke-width: 4;
  stroke-linecap: round;
}
.more {
  margin: -3px 0 0 auto;
  width: 124px;
  height: 56px;
  border: 2px solid #e9e6ea;
  border-radius: 8px;
  background: #fff;
  font: 35px/50px Lato, "Noto Sans CJK SC", sans-serif;
  color: #2b2b2b;
  padding: 0;
}
.notice {
  height: 105px;
  border-bottom: 2px solid #d9d9d9;
  display: flex;
  align-items: center;
  padding-left: 32px;
}
.notice-text {
  margin: -4px 0 0 32px;
  font-size: 39px;
}
.close {
  margin: -2px 0 0 98px;
}
.periods {
  height: 104px;
  border-bottom: 2px solid #d9d9d9;
  position: relative;
  display: flex;
}
.period {
  position: absolute;
  top: 0;
  height: 102px;
  line-height: 106px;
  font-size: 43px;
  color: #666;
}
.period.on {
  color: #e85200;
}
.period.on::after {
  content: "";
  position: absolute;
  left: 5px;
  top: 89px;
  width: 60px;
  height: 6px;
  border-radius: 3px;
  background: #f54a00;
}
.gear {
  margin: 20px 0 0 920px;
}
.ma-bar {
  height: 63px;
  display: flex;
  align-items: center;
  padding-left: 16px;
}
.pill {
  box-sizing: border-box;
  height: 46px;
  border: 2px solid #e4e4ec;
  border-radius: 7px;
  background: #f7fbff;
  font-size: 36px;
  line-height: 42px;
  display: flex;
  align-items: center;
}
.ma-pick {
  width: 109px;
  padding-left: 8px;
}
.tri {
  flex: none;
  border: 7.500px solid transparent;
  border-top: 12px solid #666;
  border-bottom: 0;
}
.ma {
  font-size: 37px;
}
.black {
  margin-left: 12px;
}
.yellow {
  color: #f5b93a;
  margin-left: 12px;
}
.pink {
  color: #c20080;
  margin-left: 13px;
}
.arr {
  fill: none;
  stroke-width: 2.600;
  margin-left: 10px;
}
.a1 {
  stroke: #2b2b2b;
}
.a2 {
  stroke: #f5b93a;
}
.a3 {
  stroke: #c20080;
}
.dk {
  margin-left: 128px;
  box-sizing: border-box;
  position: relative;
  width: 126px;
  height: 45px;
  border-radius: 6px;
  background: #ff4400;
  color: #fff;
  font-size: 35px;
  line-height: 45px;
  padding-left: 12px;
}
.dk::after {
  content: "";
  position: absolute;
  right: 6px;
  bottom: 6px;
  border-left: 12px solid transparent;
  border-bottom: 12px solid #fff;
}
.adj {
  margin-left: 39px;
  width: 133px;
  padding-left: 12px;
}
.axis {
  font-size: 40px;
  fill: #8c8c8c;
}
.vtop {
  font-size: 37.500px;
}
.mark {
  font-size: 104px;
  font-weight: 900;
  fill: #fdfafd;
}
.hi {
  font-size: 39px;
  fill: #2a2a2a;
}
.drop {
  fill: #c8212c;
}
.badge {
  font-size: 34px;
  text-anchor: middle;
}
.rounds {
  opacity: 0.1;
}
.vol-head {
  height: 63px;
  display: flex;
  align-items: center;
  padding-left: 17px;
}
.vol-pick {
  width: 151px;
  padding-left: 5px;
}
.vol-pick .tri {
  margin-left: 11px;
}
.vol-stats {
  margin-left: 4px;
}
.stat {
  font-size: 39px;
}
.fold {
  margin-left: 61px;
  width: 45px;
  height: 62px;
  border-radius: 14px 0 0 14px;
  background: #9d999d;
}
.date text {
  font-size: 37.500px;
  fill: #666;
}
.promo {
  margin: 18px 0 0 18px;
  width: 1044px;
  height: 90px;
  border-radius: 45px;
  background: #ffece4;
  display: flex;
  align-items: center;
  padding-left: 28px;
  color: #e85400;
}
.promo-text {
  margin: -4px 0 0 52px;
  font-size: 39px;
}
.bar {
  margin-left: 46px;
  width: 2px;
  height: 36px;
  background: #c96a3c;
}
.x {
  margin-left: 15px;
}
.sections {
  margin-top: 16px;
  height: 106px;
  border-top: 2px solid #dadada;
  border-bottom: 2px solid #dadada;
  display: flex;
  padding-left: 27px;
}
.sections span {
  width: 146.300px;
  text-align: center;
  font-size: 43.500px;
  line-height: 106px;
  color: #666;
  position: relative;
}
.sections .on {
  color: #e85200;
  font-weight: 500;
}
.sections .on::after {
  content: "";
  position: absolute;
  left: 44px;
  top: 88px;
  width: 60px;
  height: 6px;
  border-radius: 3px;
  background: #f54a00;
}
.cards {
  height: 129px;
  padding: 12px 28px 0 36px;
  display: flex;
  gap: 18px;
}
.card {
  width: 499px;
  height: 117px;
  border-radius: 24px 24px 0 0;
  background: #fffbf8;
  overflow: hidden;
  position: relative;
  box-sizing: border-box;
  padding: 30px 0 0 24px;
}
.card-bg {
  position: absolute;
  left: 0;
  top: 0;
}
.card-title {
  position: relative;
  display: flex;
  align-items: center;
  height: 48px;
  font-size: 41px;
  font-weight: 600;
  color: #2b2b2b;
}
.card-title span {
  margin: -3px 0 0 13px;
}
.chev {
  margin-left: 12px;
}
.vs {
  font: italic 900 27px Lato, sans-serif;
  fill: #fff;
  text-anchor: middle;
}
.rank {
  position: relative;
  margin: 17px 0 0 5px;
  font-size: 35px;
  line-height: 50px;
  color: #555;
}
.rank b {
  color: #f03000;
  font-weight: 900;
  font-size: 39px;
}
.duel {
  position: relative;
  margin: 20px 0 0 18px;
  display: flex;
  gap: 5px;
  width: 416px;
  height: 44px;
  border: 4px solid #fff;
  border-radius: 28px 28px 0 0;
  overflow: hidden;
}
.duel i {
  flex: 1;
}
.r {
  background: #ffd5d5;
}
.g {
  background: #cfefdc;
}
.dock {
  height: 176px;
  border-top: 2px solid #d6d9dc;
  background: #f7fbff;
  display: flex;
  position: relative;
}
.index {
  width: 274px;
  position: relative;
  box-sizing: border-box;
}
.up {
  display: block;
  width: 0;
  border: 10.500px solid transparent;
  border-top: 0;
  border-bottom: 7px solid #777;
  margin: 8px 0 0 127px;
}
.idx {
  margin: 9px 0 0 64px;
  height: 50px;
  line-height: 50px;
  font-size: 41px;
  color: #009a08;
}
.idx2 {
  display: flex;
  height: 50px;
  line-height: 48px;
  padding-left: 41px;
}
.nm {
  font-size: 35px;
  color: #666;
}
.pc {
  margin-left: 43px;
  font-size: 38.500px;
  color: #009a08;
}
.item {
  width: 201.500px;
  display: flex;
  flex-direction: column;
  align-items: center;
  padding-top: 8px;
  color: #5f5f61;
  font-size: 34.500px;
  line-height: 50px;
}
.item span {
  margin-top: 12px;
}
.home {
  position: absolute;
  left: 324px;
  top: 164px;
  width: 432px;
  height: 7px;
  border-radius: 4px;
  background: #bdbdbd;
}
.ink {
  position: absolute;
  left: 0;
  top: 770px;
  fill: none;
  stroke: #ff0000;
  stroke-width: 11.500;
  stroke-linecap: round;
  stroke-linejoin: round;
  pointer-events: none;
}
</style>
